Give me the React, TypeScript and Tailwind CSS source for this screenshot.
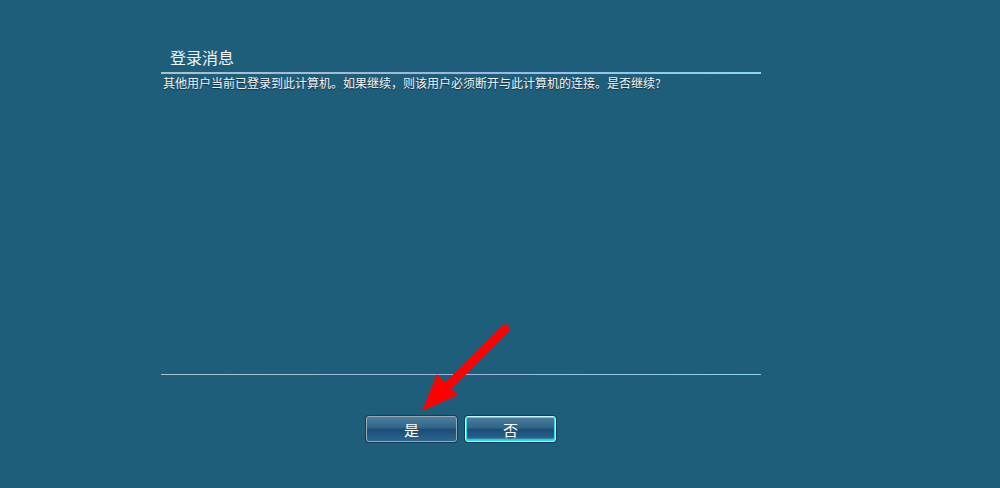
import React from "react";

const font = { fontFamily: '"Noto Sans CJK SC", "Liberation Sans", sans-serif' };

const App: React.FC = () => {
  return (
    <div className="relative w-[1000px] h-[488px] bg-[#1f5e7b] text-white overflow-hidden" style={font}>
      <div className="ml-[161px] w-[600px] pt-[45px] flex flex-col">
        <span className="pl-[9px] text-[16px] leading-[24px] text-[#f2f4f6]">登录消息</span>
        <div className="mt-[3px] h-[2px] bg-gradient-to-r from-[#a9c3cc] via-[#9fb4e0] to-[#86d8f2]" />
        <span className="pl-[2px] mt-[1px] text-[12px] leading-[16px] text-[#f4f4f4] [text-shadow:0_1px_1px_rgba(0,0,0,0.5)]">
          其他用户当前已登录到此计算机。如果继续，则该用户必须断开与此计算机的连接。是否继续?
        </span>
        <div className="h-[283px]" />
        <div className="h-px bg-gradient-to-r from-[#a9c3cc] via-[#9fb4e0] to-[#86d8f2]" />
        <div className="mt-[41px] flex gap-[8px] pl-[205px]">
          <button className="w-[91px] h-[26px] rounded-[3px] border border-[#9aaab6] bg-[linear-gradient(to_bottom,#4d7e9e_0%,#2f6488_45%,#1b4d76_52%,#2a6690_100%)] text-[15px] text-white leading-none shadow-[0_0_0_1px_#153e55]">
            是
          </button>
          <button className="w-[91px] h-[26px] rounded-[3px] border border-[#c8f8ff] bg-[linear-gradient(to_bottom,#4d7e9e_0%,#2f6488_45%,#1b4d76_52%,#2a6690_100%)] text-[15px] text-white leading-none shadow-[0_0_0_1px_#153e55,inset_0_0_0_1px_#2fd8ec,inset_0_-2px_2px_#3fe0f0]">
            否
          </button>
        </div>
      </div>
      <svg className="absolute left-0 top-0" width="1000" height="488" viewBox="0 0 1000 488">
        <line x1="505" y1="329" x2="445" y2="389" stroke="#ff0000" strokeWidth="9" strokeLinecap="round" />
        <polygon points="422,411 437,374 458,395" fill="#ff0000" />
      </svg>
    </div>
  );
};

export default App;
